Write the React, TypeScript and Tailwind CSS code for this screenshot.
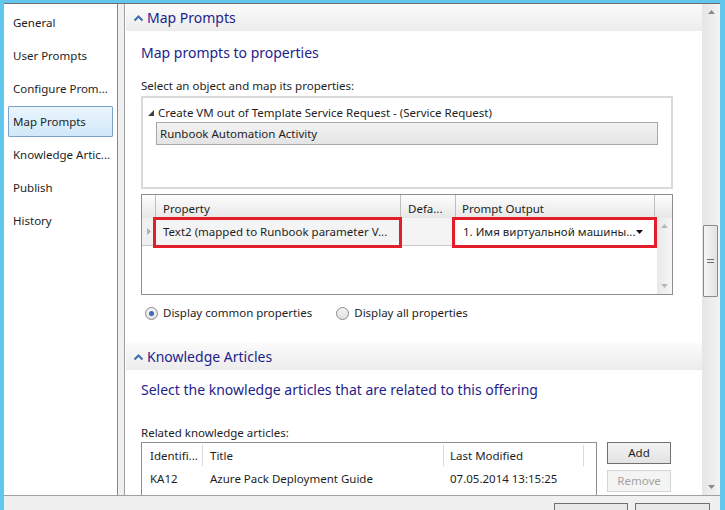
import React from "react"

const font = { fontFamily: '"Noto Sans", "Segoe UI", sans-serif' }

const navItems = [
  "General",
  "User Prompts",
  "Configure Prom...",
  "Map Prompts",
  "Knowledge Artic...",
  "Publish",
  "History",
]

const Chevron = () => (
  <svg width="11" height="8" viewBox="0 0 11 8" className="shrink-0">
    <path d="M1.5 6.5 L5.5 2.5 L9.5 6.5" fill="none" stroke="#3b6fb0" strokeWidth="2" />
  </svg>
)

const SectionHeader = ({ title }: { title: string }) => (
  <div className="flex h-[27px] items-center gap-[3px] bg-gradient-to-b from-[#fbfbfb] to-[#ececec] pl-[7px] text-[14px] text-[#1e1e8c]">
    <Chevron />
    <span className="leading-none">{title}</span>
  </div>
)

const Radio = ({ checked, label }: { checked?: boolean; label: string }) => (
  <label className="flex items-center gap-[5px]">
    <span className="flex h-[13px] w-[13px] items-center justify-center rounded-full border border-[#8a8a8a] bg-gradient-to-b from-[#f4f4f4] to-[#e2e2e2]">
      {checked && <span className="h-[5px] w-[5px] rounded-full bg-[#3a6db5]" />}
    </span>
    <span>{label}</span>
  </label>
)

const ArrowUp = ({ color = "#8a8a8a" }: { color?: string }) => (
  <svg width="7" height="4" viewBox="0 0 7 4">
    <path d="M0 4 L3.5 0 L7 4 Z" fill={color} />
  </svg>
)

const ArrowDown = ({ color = "#8a8a8a" }: { color?: string }) => (
  <svg width="7" height="4" viewBox="0 0 7 4">
    <path d="M0 0 L3.5 4 L7 0 Z" fill={color} />
  </svg>
)

export default function App() {
  return (
    <div
      className="flex h-[510px] w-[725px] flex-col overflow-hidden bg-[#62c7ec] pl-[4px] pr-[5px] pt-[3px] text-[11.5px] text-[#1e1e1e]"
      style={font}
    >
      <div className="flex min-h-0 flex-1 flex-col border-t border-[#6e6e6e] bg-[#f0f0f0]">
        <div className="flex min-h-0 flex-1">
          {/* Left navigation */}
          <div className="flex w-[114px] shrink-0 flex-col border-r border-[#828790] bg-white pt-[2px]">
            {navItems.map((item) => (
              <div
                key={item}
                className={
                  item === "Map Prompts"
                    ? "mx-[4px] my-[1px] flex h-[31px] items-center whitespace-nowrap rounded-[1px] border border-[#7da2ce] bg-gradient-to-b from-[#eaf5fd] to-[#d0e8f9] pl-[4px]"
                    : "mx-[4px] flex h-[33px] items-center whitespace-nowrap pl-[5px]"
                }
              >
                {item}
              </div>
            ))}
          </div>

          {/* Main content */}
          <div className="ml-[6px] flex min-w-0 flex-1 border-l border-[#a0a0a0] bg-white">
            <div className="min-w-0 flex-1 overflow-hidden pl-[1px]">
              <SectionHeader title="Map Prompts" />
              <div className="pl-[15px] pr-[29px]">
                <div className="mt-[12px] text-[14px] leading-[20px] text-[#1e1e8c]">Map prompts to properties</div>
                <div className="mt-[15px] leading-[16px]">Select an object and map its properties:</div>

                {/* Object tree */}
                <div className="mt-[2px] h-[93px] border-2 border-[#d9d9d9] bg-white px-[13px] pt-[5px]">
                  <div className="-ml-[8px] flex h-[19px] items-center gap-[4px]">
                    <svg width="6" height="6" viewBox="0 0 6 6">
                      <path d="M6 0 L6 6 L0 6 Z" fill="#404040" />
                    </svg>
                    <span>Create VM out of Template Service Request - (Service Request)</span>
                  </div>
                  <div className="flex h-[23px] items-center border border-[#a8a8a8] bg-gradient-to-b from-[#f3f3f3] to-[#e4e4e4] pl-[3px]">
                    Runbook Automation Activity
                  </div>
                </div>

                {/* Property grid */}
                <div className="relative mt-[5px] flex h-[101px] flex-col border border-[#8e8e8e] bg-white">
                  <div className="flex h-[23px] shrink-0 bg-gradient-to-b from-[#fdfdfd] to-[#e7e7e7]">
                    <div className="w-[14px] border-r border-[#bdbdbd]" />
                    <div className="flex w-[245px] items-end border-r border-[#bdbdbd] pb-[1px] pl-[7px]">Property</div>
                    <div className="flex w-[55px] items-end border-r border-[#bdbdbd] pb-[1px] pl-[7px]">Defa...</div>
                    <div className="flex w-[199px] items-end border-r border-[#bdbdbd] pb-[1px] pl-[6px]">Prompt Output</div>
                    <div className="flex-1" />
                  </div>
                  <div className="flex min-h-0 flex-1">
                    <div className="flex-1">
                      <div className="flex h-[28px] border-b border-[#c8c8c8]">
                        <div className="flex w-[14px] items-center justify-center bg-[#f0f0f0]">
                          <svg width="4" height="7" viewBox="0 0 4 7">
                            <path d="M0 0 L4 3.5 L0 7 Z" fill="#b0b0b0" />
                          </svg>
                        </div>
                        <div className="flex w-[245px] items-center whitespace-nowrap bg-[#f4f4f4] pl-[7px]">Text2 (mapped to Runbook parameter V...</div>
                        <div className="w-[55px] bg-[#f4f4f4]" />
                        <div className="flex flex-1 items-center justify-between whitespace-nowrap pl-[7px] pr-[14px]">
                          <span>1. Имя виртуальной машины...</span>
                          <ArrowDown color="#111" />
                        </div>
                      </div>
                    </div>
                    <div className="flex w-[15px] flex-col items-center justify-between bg-gradient-to-r from-[#e9e9e9] to-[#f6f6f6] py-[6px]">
                      <ArrowUp color="#b8b8b8" />
                      <ArrowDown color="#b8b8b8" />
                    </div>
                  </div>
                  {/* Highlight annotations */}
                  <div className="absolute left-[11px] top-[22px] h-[31px] w-[249px] border-[3px] border-[#e41d2a]" />
                  <div className="absolute left-[310px] top-[22px] h-[31px] w-[205px] border-[3px] border-[#e41d2a]" />
                </div>

                <div className="mt-[10px] flex h-[16px] gap-[24px] pl-[4px]">
                  <Radio checked label="Display common properties" />
                  <Radio label="Display all properties" />
                </div>
              </div>

              <div className="mt-[22px]">
                <SectionHeader title="Knowledge Articles" />
              </div>
              <div className="pl-[15px] pr-[29px]">
                <div className="mt-[10px] text-[14px] leading-[20px] text-[#1e1e8c]">
                  Select the knowledge articles that are related to this offering
                </div>
                <div className="mt-[25px] leading-[16px]">Related knowledge articles:</div>
                <div className="mt-[1px] flex gap-[10px]">
                  <div className="h-[60px] w-[456px] border border-[#8e8e8e] bg-white">
                    <div className="flex h-[25px] items-center">
                      <div className="flex h-[21px] w-[61px] items-center border-r border-[#dadada] pl-[8px]">Identifi...</div>
                      <div className="flex h-[21px] w-[241px] items-center border-r border-[#dadada] pl-[7px]">Title</div>
                      <div className="flex h-[21px] w-[140px] items-center border-r border-[#dadada] pl-[6px]">Last Modified</div>
                    </div>
                    <div className="flex h-[22px] items-center">
                      <div className="w-[61px] pl-[8px]">KA12</div>
                      <div className="w-[241px] pl-[7px]">Azure Pack Deployment Guide</div>
                      <div className="pl-[6px]">07.05.2014 13:15:25</div>
                    </div>
                  </div>
                  <div className="flex flex-col gap-[6px]">
                    <button className="h-[22px] w-[64px] border border-[#707070] bg-gradient-to-b from-[#f2f2f2] to-[#e3e3e3]">Add</button>
                    <button className="h-[22px] w-[64px] border border-[#d5d5d5] bg-[#f4f4f4] text-[#a3a3a3]">Remove</button>
                  </div>
                </div>
              </div>
            </div>

            {/* Main scrollbar */}
            <div className="relative flex w-[18px] shrink-0 flex-col items-center justify-between bg-gradient-to-r from-[#e6e6e6] to-[#f3f3f3] py-[6px]">
              <ArrowUp />
              <div className="absolute left-[1px] top-[221px] flex h-[72px] w-[15px] flex-col items-center justify-center gap-[2px] rounded-[1px] border border-[#8a8a8a] bg-gradient-to-r from-[#f6f6f6] to-[#e2e2e2]">
                <div className="h-px w-[7px] bg-[#6e6e6e]" />
                <div className="h-px w-[7px] bg-[#6e6e6e]" />
              </div>
              <ArrowDown />
            </div>
          </div>
        </div>

        {/* Bottom dialog bar */}
        <div className="flex h-[15px] shrink-0 items-start justify-end gap-[7px] border-t border-[#a0a0a0] bg-[#f0f0f0] pr-[10px] pt-[7px]">
          <div className="h-[20px] w-[74px] border border-[#707070] bg-[#e8e8e8]" />
          <div className="h-[20px] w-[75px] border border-[#707070] bg-[#e8e8e8]" />
        </div>
      </div>
    </div>
  )
}
